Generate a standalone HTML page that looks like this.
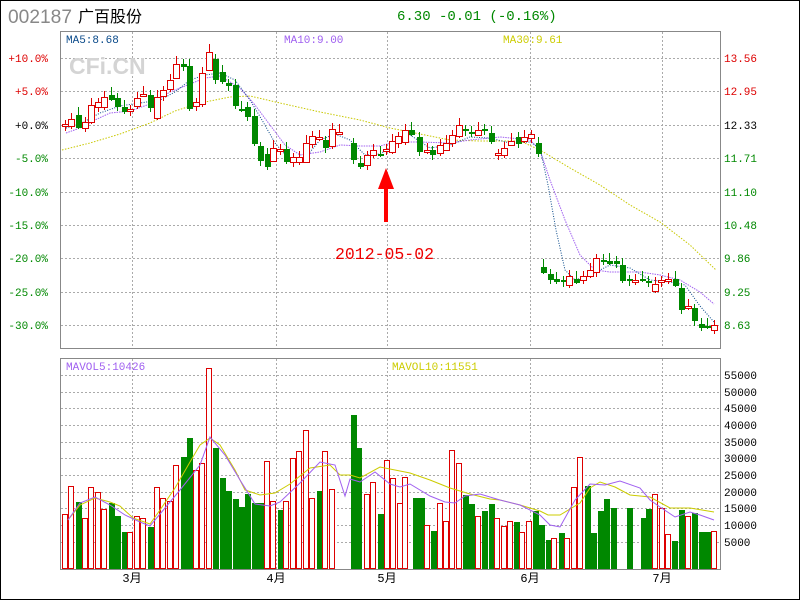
<!DOCTYPE html>
<html><head><meta charset="utf-8"><style>
html,body{margin:0;padding:0;background:#fff;width:800px;height:600px;overflow:hidden}
svg{display:block}
text{font-family:"Liberation Mono","Noto Sans CJK SC",monospace}
</style></head><body>
<svg id="s" width="800" height="600" xmlns="http://www.w3.org/2000/svg">
<rect x="0.5" y="0.5" width="799" height="599" fill="#fff" stroke="#000"/>
<text x="8" y="23" font-size="19" fill="#888" textLength="64" lengthAdjust="spacingAndGlyphs" style="font-family:'Liberation Sans',sans-serif">002187</text>
<text x="78" y="22" font-size="16" fill="#000" style="font-family:'Liberation Sans','Noto Sans CJK SC',sans-serif">广百股份</text>
<text x="397" y="20" font-size="14" fill="#080">6.30 -0.01 (-0.16%)</text>
<g id="grid" stroke="#aaa" stroke-dasharray="2,2" stroke-width="1"></g>
<rect x="60.5" y="31.5" width="660" height="317" fill="none" stroke="#888"/>
<rect x="60.5" y="358.5" width="660" height="211" fill="none" stroke="#888"/>
<text x="69" y="74" font-size="23" font-weight="bold" fill="#d4d4d4" style="font-family:'Liberation Sans',sans-serif">CFi.CN</text>
<text x="66" y="43" font-size="11" fill="#0a4a8a">MA5:8.68</text>
<text x="284" y="43" font-size="11" fill="#a060f0">MA10:9.00</text>
<text x="503" y="43" font-size="11" fill="#cccc00">MA30:9.61</text>
<text x="66" y="370" font-size="11" fill="#a060f0">MAVOL5:10426</text>
<text x="392" y="370" font-size="11" fill="#cccc00">MAVOL10:11551</text>
<g id="lab" font-size="11"></g>
<g id="ma"></g>
<g id="c"></g>
<g id="v"></g>
<polygon points="386,168 378,189 384,189 384,222 388,222 388,189 394,189" fill="#f00"/>
<text x="335" y="259" font-size="16.5" fill="#e00">2012-05-02</text>
</svg>
<script>
var S=document.getElementById('s'),NS='http://www.w3.org/2000/svg';
function el(p,t,a,tx){var e=document.createElementNS(NS,t);for(var k in a)e.setAttribute(k,a[k]);if(tx)e.textContent=tx;document.getElementById(p).appendChild(e);}
var hy=[58,91,125,158,192,225,258,292,325];
hy.forEach(function(y){el('grid','line',{x1:61,x2:720,y1:y+.5,y2:y+.5});});
[375,392,408,425,442,458,475,492,508,525,542].forEach(function(y){el('grid','line',{x1:61,x2:720,y1:y+.5,y2:y+.5});});
[132,276,387,530,662].forEach(function(x){el('grid','line',{x1:x+.5,x2:x+.5,y1:32,y2:348});el('grid','line',{x1:x+.5,x2:x+.5,y1:359,y2:569});});
var L=['+10.0%','+5.0%','+0.0%','-5.0%','-10.0%','-15.0%','-20.0%','-25.0%','-30.0%'];
var R=['13.56','12.95','12.33','11.71','11.10','10.48','9.86','9.25','8.63'];
hy.forEach(function(y,i){var c=i<2?'#d00':(i==2?'#000':'#080');
el('lab','text',{x:48,y:y+4,'text-anchor':'end',fill:c},L[i]);
el('lab','text',{x:724,y:y+4,fill:c},R[i]);});
[55000,50000,45000,40000,35000,30000,25000,20000,15000,10000,5000].forEach(function(v,i){el('lab','text',{x:724,y:[375,392,408,425,442,458,475,492,508,525,542][i]+4,fill:'#000'},v);});
[['3月',132],['4月',276],['5月',387],['6月',530],['7月',662]].forEach(function(m){el('lab','text',{x:m[1],y:582,'text-anchor':'middle',fill:'#000','font-size':12},m[0]);});
var C=[[65,124,126,'r'],[71,119,126,'r'],[78,115,128,'g'],[85,122,128,'r'],[91,105,122,'r'],[98,102,107,'r'],[104,97,107,'r'],[111,95,100,'g'],[117,98,107,'g'],[124,107,112,'g'],[130,109,111,'r'],[137,98,106,'r'],[143,94,96,'r'],[150,95,108,'g'],[157,97,118,'r'],[163,90,96,'r'],[170,80,89,'r'],[176,64,78,'r'],[183,64,67,'g'],[189,66,109,'g'],[196,102,106,'r'],[202,73,104,'r'],[209,52,70,'r'],[215,59,80,'g'],[222,72,82,'g'],[228,83,86,'g'],[235,85,106,'g'],[241,109,111,'g'],[247,107,117,'g'],[254,116,144,'g'],[260,146,161,'g'],[267,154,167,'g'],[273,148,161,'r'],[280,149,151,'r'],[286,149,162,'g'],[293,157,162,'r'],[299,157,162,'r'],[306,143,162,'r'],[312,136,144,'r'],[319,137,139,'r'],[325,140,148,'g'],[332,129,146,'r'],[339,132,134,'r'],
[353,143,160,'g'],[360,163,167,'g'],[367,155,165,'r'],[373,150,155,'r'],[380,154,156,'g'],[386,149,151,'r'],[392,141,152,'r'],[398,136,143,'r'],[405,130,142,'r'],[411,130,135,'g'],[419,137,152,'g'],[427,150,152,'r'],[432,150,155,'g'],[440,145,153,'r'],[446,143,150,'r'],[452,135,143,'r'],[459,125,136,'r'],[465,129,131,'g'],[471,132,134,'g'],[478,130,135,'r'],[484,129,131,'g'],[491,133,142,'g'],[498,153,155,'r'],[504,148,155,'r'],[511,141,145,'r'],[518,137,144,'g'],[524,137,141,'r'],[531,134,138,'r'],[538,143,154,'g'],
[543,267,273,'g'],[550,274,280,'g'],[556,279,282,'g'],[563,280,282,'g'],[569,276,285,'r'],[576,279,283,'g'],[583,276,280,'r'],[590,270,276,'r'],[596,258,272,'r'],[603,260,262,'g'],[609,261,264,'g'],[616,261,264,'g'],[622,265,281,'g'],[629,279,281,'g'],[635,280,282,'r'],[642,279,281,'g'],[648,281,283,'g'],[655,284,291,'r'],[661,280,282,'r'],[668,279,281,'r'],[675,279,286,'g'],[681,288,310,'g'],[688,306,308,'r'],[694,308,321,'g'],[701,324,328,'g'],[707,326,328,'g'],[714,325,330,'r']];
C.forEach(function(c,i){var col=c[3]=='r'?'#d00':'#080';var w=4+(i*7%5);
el('c','line',{x1:c[0]+.5,x2:c[0]+.5,y1:c[1]-w,y2:c[2]+(9-w),stroke:col});
if(c[3]=='r')el('c','rect',{x:c[0]-2.5,y:c[1]+.5,width:6,height:Math.max(1,c[2]-c[1]),fill:'#fff',stroke:col});
else el('c','rect',{x:c[0]-2,y:c[1],width:6,height:Math.max(2,c[2]-c[1]),fill:col});});
function pl(pts,col,dash,w){el('ma','polyline',{points:pts,fill:'none',stroke:col,'stroke-width':w||1,'stroke-dasharray':dash||''});}
pl('62,150 90,143 120,134 150,123 175,111 200,103 230,97 250,96 280,103 320,112 360,120 390,128 420,134 450,140 480,141 520,141 540,150 570,168 600,185 630,205 660,222 690,245 716,270','#c8c800','1.5,1.5');
pl('66,133 80,128 95,120 110,113 130,111 150,104 170,92 190,84 205,78 220,76 240,88 255,105 270,125 285,145 300,155 320,152 340,145 360,146 380,146 395,142 420,142 450,143 470,140 500,137 530,140 540,150 550,180 565,220 580,255 595,270 610,272 640,272 660,275 680,280 700,292 714,304','#a060f0','1.5,1');
pl('66,128 80,124 100,113 120,106 140,103 160,100 175,92 190,80 205,75 220,73 235,80 250,100 262,120 275,143 290,160 305,158 320,140 335,134 350,140 365,155 380,154 395,145 410,135 430,148 450,145 470,137 490,138 510,143 530,142 540,148 548,185 556,230 565,270 575,280 590,275 610,265 630,268 650,280 670,282 685,285 700,306 714,322','#0a4a8a','1,1.5');
var V=[[65,514,'r'],[71,486,'r'],[78,502,'g'],[85,518,'r'],[91,487,'r'],[98,492,'r'],[104,509,'r'],[111,503,'g'],[117,516,'g'],[124,532,'g'],[130,532,'r'],[137,516,'r'],[143,518,'r'],[150,527,'g'],[157,487,'r'],[163,498,'r'],[170,501,'r'],[176,465,'r'],[183,457,'g'],[189,438,'g'],[196,470,'r'],[202,463,'r'],[209,368,'r'],[215,448,'g'],[222,478,'g'],[228,491,'g'],[235,499,'g'],[241,507,'g'],[247,494,'g'],[254,503,'g'],[260,503,'g'],[267,461,'r'],[273,501,'r'],[280,510,'g'],[286,501,'r'],[293,458,'r'],[299,451,'r'],[306,430,'r'],[312,498,'r'],[319,491,'g'],[325,451,'r'],[332,489,'r'],[353,415,'g'],[358,448,'g'],[367,494,'r'],[373,482,'r'],[380,514,'g'],[387,460,'r'],[393,478,'r'],[400,503,'r'],[405,477,'r'],[415,498,'g'],[421,498,'g'],[427,525,'r'],[433,531,'g'],[440,503,'r'],[446,521,'r'],[452,450,'r'],[459,463,'r'],[465,495,'g'],[471,504,'g'],[478,516,'r'],[484,511,'g'],[491,504,'g'],[497,518,'r'],[504,526,'r'],[510,521,'r'],[516,522,'g'],[522,532,'r'],[529,521,'r'],[535,511,'g'],[541,525,'g'],[548,540,'g'],[554,538,'r'],[561,533,'g'],[567,538,'r'],[574,487,'r'],[580,457,'r'],[587,486,'g'],[593,533,'g'],[600,511,'g'],[606,499,'g'],[613,508,'g'],[629,508,'g'],[643,518,'g'],[648,509,'g'],[655,494,'r'],[662,508,'r'],[668,534,'r'],[674,541,'g'],[681,510,'g'],[688,516,'r'],[694,513,'g'],[701,532,'g'],[707,532,'g'],[714,531,'r']];
V.forEach(function(b){if(b[2]=='r')el('v','rect',{x:b[0]-2.5,y:b[1]+.5,width:5,height:568-b[1],fill:'#fff',stroke:'#d00'});else el('v','rect',{x:b[0]-2,y:b[1],width:6,height:569-b[1],fill:'#080'});});
el('v','polyline',{points:'68,520 80,505 95,498 110,502 120,506 133,518 150,524 160,510 175,488 190,462 200,445 210,438 220,445 235,470 245,490 260,495 275,493 290,484 310,468 330,465 340,475 350,475 360,478 380,467 395,470 410,473 430,480 450,488 470,494 490,499 500,500 520,505 540,511 548,515 560,515 580,503 590,488 600,482 615,487 630,495 650,497 670,508 690,508 714,512','fill':'none',stroke:'#cccc00'});
el('v','polyline',{points:'68,520 80,503 95,497 110,505 125,515 140,522 150,526 165,508 180,490 200,465 210,437 225,455 240,480 255,504 270,506 280,502 300,483 320,462 335,465 345,496 350,479 360,482 375,472 390,484 400,487 410,484 430,496 445,502 455,503 465,496 480,494 500,500 520,505 540,515 550,525 560,527 575,500 590,484 605,485 620,481 640,488 650,500 660,507 675,517 690,512 700,515 714,520','fill':'none',stroke:'#a060f0'});
</script>
</body></html>
